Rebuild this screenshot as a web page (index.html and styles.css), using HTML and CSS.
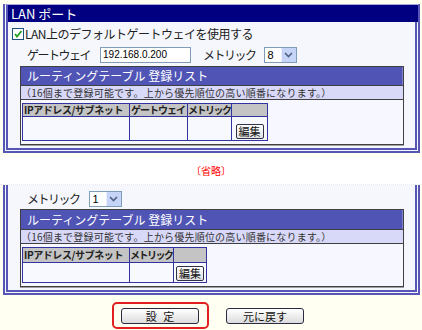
FILE: index.html
```html
<!DOCTYPE html>
<html lang="ja">
<head>
    <meta charset="UTF-8">
    <title>LAN ポート</title>
    <link rel="stylesheet" href="styles.css">
</head>
<body>
    <div class="panel panel-top">
        <div class="panel-title">LAN ポート</div>
        <div class="row row-check">
            <span class="check">
                <svg width="10" height="10" viewBox="0 0 10 10"><path d="M2 5 L4 7.5 L8.5 2" fill="none" stroke="#21a121" stroke-width="1.8"/></svg>
            </span>
            <span>LAN上のデフォルトゲートウェイを使用する</span>
        </div>
        <div class="row row-field">
            <span class="label">ゲートウェイ</span>
            <span class="input">192.168.0.200</span>
            <span class="label label-metric">メトリック</span>
            <span class="select">
                <span class="select-value">8</span>
                <span class="select-arrow"><svg width="9" height="6" viewBox="0 0 9 6"><path d="M1 1 L4.5 4.5 L8 1" fill="none" stroke="#4d6185" stroke-width="1.6"/></svg></span>
            </span>
        </div>
        <div class="route">
            <div class="route-head">ルーティングテーブル 登録リスト</div>
            <div class="route-note">（16個まで登録可能です。上から優先順位の高い順番になります。）</div>
            <div class="route-body">
                <table class="list list-wide">
                    <tr class="list-head">
                        <th class="col-ip">IPアドレス/サブネット</th>
                        <th class="col-gw">ゲートウェイ</th>
                        <th class="col-metric">メトリック</th>
                        <th class="col-edit"></th>
                    </tr>
                    <tr class="list-row">
                        <td></td>
                        <td></td>
                        <td></td>
                        <td><span class="btn-edit">編集</span></td>
                    </tr>
                </table>
            </div>
        </div>
    </div>

    <div class="omit">〔省略〕</div>

    <div class="panel panel-bottom">
        <div class="row row-field row-metric">
            <span class="label">メトリック</span>
            <span class="select select-near">
                <span class="select-value">1</span>
                <span class="select-arrow"><svg width="9" height="6" viewBox="0 0 9 6"><path d="M1 1 L4.5 4.5 L8 1" fill="none" stroke="#4d6185" stroke-width="1.6"/></svg></span>
            </span>
        </div>
        <div class="route route-small">
            <div class="route-head">ルーティングテーブル 登録リスト</div>
            <div class="route-note">（16個まで登録可能です。上から優先順位の高い順番になります。）</div>
            <div class="route-body">
                <table class="list list-narrow">
                    <tr class="list-head">
                        <th class="col-ip">IPアドレス/サブネット</th>
                        <th class="col-metric">メトリック</th>
                        <th class="col-edit2"></th>
                    </tr>
                    <tr class="list-row">
                        <td></td>
                        <td></td>
                        <td><span class="btn-edit">編集</span></td>
                    </tr>
                </table>
            </div>
        </div>
    </div>

    <div class="actions">
        <span class="highlight"><span class="btn btn-set">設 定</span></span>
        <span class="btn">元に戻す</span>
    </div>
</body>
</html>
```

FILE: styles.css
```css
body {
    margin: 0;
    background: #fffff2;
    font-family: "Noto Sans CJK JP", "DejaVu Sans", sans-serif;
    font-size: 12px;
    color: #222;
}
.panel {
    margin: 0 2px 0 3px;
    background: #f5f7fd;
    border: 5px double #5656b6;
    border-top: none;
}
.panel-top {
    margin-top: 4px;
    border-top: 1px solid #a8a8dc;
    padding-bottom: 3px;
}
.panel-bottom {
    padding-top: 5px;
    padding-bottom: 3px;
}
.panel-title {
    height: 17px;
    line-height: 17px;
    background: #000080;
    color: white;
    font-size: 13px;
    padding-left: 3px;
    margin-right: -3px;
}
.row {
    display: flex;
    align-items: center;
}
.row-check {
    height: 23px;
    padding-left: 4px;
    letter-spacing: -0.5px;
}
.check {
    width: 10px;
    height: 10px;
    border: 1px solid #1c5180;
    background: white;
    display: flex;
    align-items: center;
    justify-content: center;
    margin-right: 1px;
}
.row-field {
    height: 19px;
    padding-left: 19px;
}
.row-metric {
    height: 17px;
    margin-bottom: 2px;
}
.label {
    letter-spacing: -1.5px;
}
.label-metric {
    margin-left: 12px;
}
.input {
    width: 87px;
    height: 14px;
    margin-left: 10px;
    border: 1px solid #7f9db9;
    background: white;
    font-family: "Liberation Sans", Arial, sans-serif;
    font-size: 10px;
    line-height: 14px;
    padding-left: 2px;
    color: #000;
}
.select {
    display: flex;
    width: 31px;
    height: 14px;
    margin-left: 8px;
    border: 1px solid #7f9db9;
    background: white;
    font-family: "Liberation Sans", Arial, sans-serif;
    font-size: 11px;
}
.select-near {
    margin-left: 9px;
}
.select-value {
    flex: 1;
    line-height: 14px;
    padding-left: 3px;
    color: #000;
}
.select-arrow {
    width: 14px;
    background: #c6d5f7;
    border-left: 1px solid #e8eefc;
    display: flex;
    align-items: center;
    justify-content: center;
}
.route {
    margin: 2px 11px 0 12px;
    border: 1px solid #404040;
    box-shadow: 0 1px 0 #a0a0a0;
    background: #f7f8ff;
}
.route-head {
    height: 18px;
    line-height: 18px;
    background: #5055b5;
    color: white;
    padding-left: 6px;
    border-right: 1px solid #7c80d0;
    box-sizing: border-box;
}
.route-note {
    height: 15px;
    line-height: 13px;
    background: #d8d8f8;
    border-top: 1px solid #404040;
    border-bottom: 1px solid #404040;
    box-sizing: border-box;
    font-size: 10px;
    color: #333;
    letter-spacing: 0.2px;
}
.route-body {
    padding: 3px 0 3px 1px;
}
.route-small .route-head {
    height: 19px;
    line-height: 19px;
}
.list {
    border-collapse: collapse;
    table-layout: fixed;
    border: 1px solid #808080;
    font-size: 10px;
}
.list-wide {
    width: 243px;
}
.list-narrow {
    width: 183px;
}
.list th,
.list td {
    border: 1px solid #3333a0;
    padding: 0;
}
.list-head th {
    height: 12px;
    background: #c4c4c4;
    font-weight: bold;
    text-align: left;
    padding-left: 1px;
    line-height: 12px;
    white-space: nowrap;
    overflow: hidden;
    letter-spacing: -1px;
}
.list-head .col-ip {
    letter-spacing: -0.4px;
}
.list-head .col-metric {
    letter-spacing: -1.5px;
    padding-left: 0;
}
.route-small .list-head th {
    height: 14px;
}
.list-row td {
    height: 23px;
    background: #f8f8ff;
    vertical-align: bottom;
}
.route-small .list-row td {
    height: 19px;
}
.col-ip { width: 105px; }
.col-gw { width: 56px; }
.col-metric { width: 43px; }
.col-edit { width: 34px; }
.col-edit2 { width: 31px; }
.btn-edit {
    display: block;
    width: 26px;
    height: 13px;
    margin: 0 auto 1px;
    border: 1px solid #30304a;
    border-radius: 2px;
    background: linear-gradient(#ffffff, #e2e2e2);
    font-size: 11px;
    line-height: 13px;
    text-align: center;
    color: #111;
}
.omit {
    height: 32px;
    background: white;
    border-top: 4px solid #fffff2;
    border-bottom: 1px dotted #e8e8f4;
    box-sizing: border-box;
    text-align: center;
    color: #ff0000;
    font-size: 10px;
    line-height: 28px;
}
.actions {
    display: flex;
    align-items: center;
    padding: 7px 0 0 112px;
}
.highlight {
    border: 2px solid #e32020;
    border-radius: 5px;
    padding: 4px 8px 3px 7px;
    margin-right: 17px;
}
.btn {
    display: block;
    width: 76px;
    height: 14px;
    border: 1px solid #2a2a40;
    border-radius: 3px;
    background: linear-gradient(#ffffff, #dcdcdc);
    text-align: center;
    font-size: 11px;
    line-height: 14px;
    color: #111;
}
.btn-set {
    word-spacing: 4px;
}
```
